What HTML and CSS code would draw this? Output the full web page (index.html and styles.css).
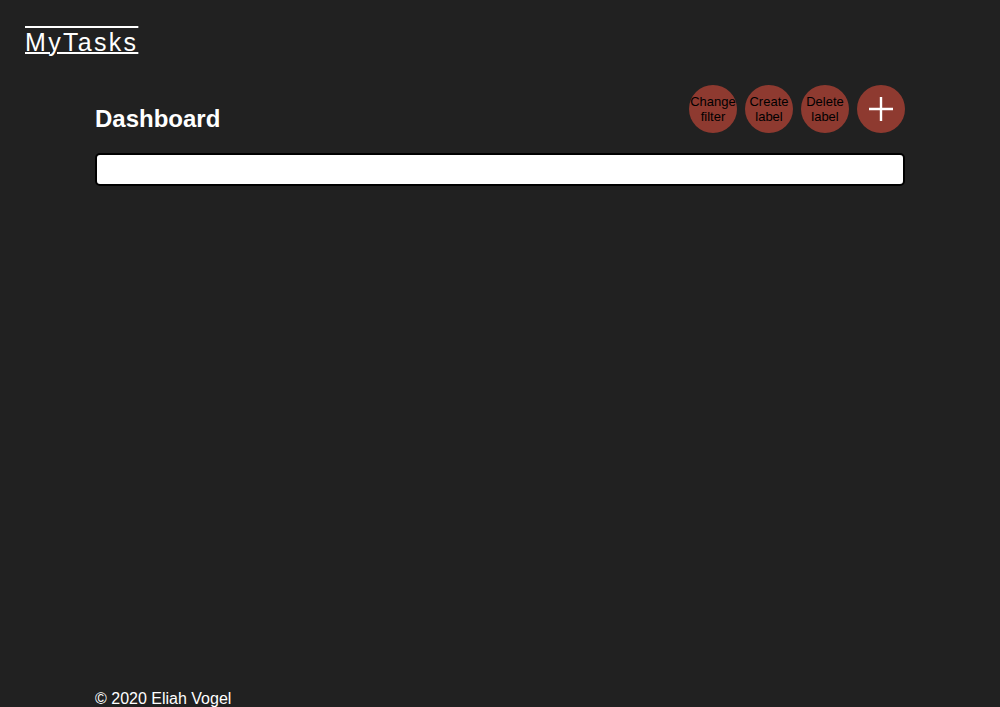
FILE: index.html
```html
<!DOCTYPE html>
<html lang="en">
<head>
<meta charset="utf-8">
<title>MyTasks</title>
<link rel="stylesheet" href="styles.css">
</head>
<body>
<header class="header">
  <a class="logo" href="#">MyTasks</a>
</header>
<main class="main">
  <div class="toolbar">
    <h2 class="title">Dashboard</h2>
    <div class="actions">
      <button class="circle">Change filter</button>
      <button class="circle">Create label</button>
      <button class="circle">Delete label</button>
      <button class="circle add" aria-label="Add">
        <svg width="26" height="26" viewBox="0 0 26 26"><path d="M13 1V25M1 13H25" stroke="#fff" stroke-width="2.4" fill="none"/></svg>
      </button>
    </div>
  </div>
  <input class="search" type="text">
</main>
<footer class="footer">© 2020 Eliah Vogel</footer>
</body>
</html>
```
FILE: styles.css
```css
html, body {
  margin: 0;
  padding: 0;
}
body {
  background: #212121;
  color: #fff;
  font-family: "Liberation Sans", Arial, sans-serif;
  min-height: 100vh;
  display: flex;
  flex-direction: column;
}
.header {
  padding: 28px 25px 0;
  height: 28px;
}
.logo {
  color: #fff;
  font-size: 25px;
  letter-spacing: 2.3px;
  text-decoration: underline overline;
  text-decoration-thickness: 2px;
  line-height: 28px;
  display: inline-block;
}
.main {
  width: 810px;
  margin: 29px auto 0;
}
.toolbar {
  display: flex;
  justify-content: space-between;
  align-items: flex-end;
}
.title {
  margin: 0;
  font-size: 24px;
  font-weight: bold;
  line-height: 28px;
}
.actions {
  display: flex;
  gap: 8px;
}
.circle {
  width: 48px;
  height: 48px;
  border-radius: 50%;
  border: none;
  padding: 0;
  background: #8e3a30;
  color: #000;
  font-family: "Liberation Sans", Arial, sans-serif;
  font-size: 13px;
  line-height: 15px;
  display: flex;
  align-items: center;
  justify-content: center;
  text-align: center;
}
.search {
  display: block;
  box-sizing: border-box;
  width: 100%;
  height: 33px;
  margin-top: 20px;
  border: 2px solid #000;
  border-radius: 5px;
  background: #fff;
}
.footer {
  margin-top: auto;
  width: 810px;
  margin-left: auto;
  margin-right: auto;
  font-size: 16px;
  line-height: 18px;
  margin-bottom: -1px;
}
```
